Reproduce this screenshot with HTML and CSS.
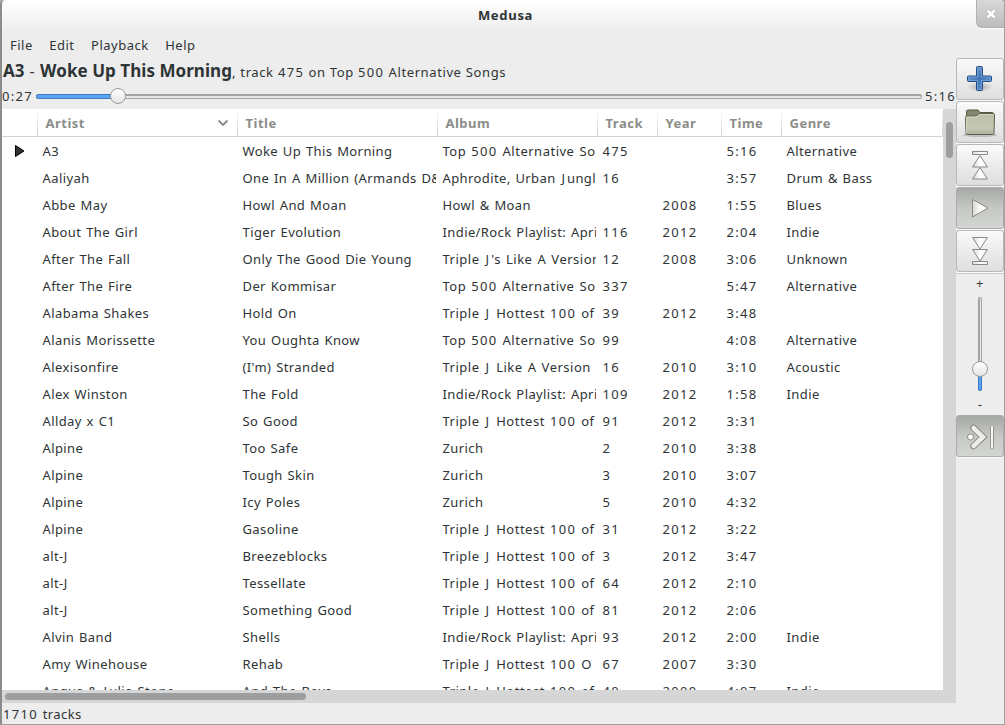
FILE: index.html
```html
<!DOCTYPE html>
<html lang="en">
<head>
<meta charset="utf-8">
<title>Medusa</title>
<link rel="stylesheet" href="styles.css">
</head>
<body>
<div class="window">
  <header class="titlebar"><span class="title">Medusa</span>
    <button class="close" aria-label="Close"><svg width="10" height="10" viewBox="0 0 10 10"><path d="M1.500 1.500 8.500 8.500M8.500 1.500 1.500 8.500" stroke="#888" stroke-width="3.800" opacity=".5"/><path d="M1.500 1.500 8.500 8.500M8.500 1.500 1.500 8.500" stroke="#fff" stroke-width="2.700"/></svg></button>
  </header>
  <nav class="menu"><span>File</span><span>Edit</span><span>Playback</span><span>Help</span></nav>
  <div class="content">
    <main class="main">
      <div class="now"><b class="now-artist">A3</b><span class="dash">-</span><b class="now-title">Woke Up This Morning</b><span class="now-rest">, track <i>475</i> on Top <i>500</i> Alternative Songs</span></div>
      <div class="seek"><span class="elapsed"><i>0:27</i></span>
        <div class="track"><div class="fill"></div><div class="knob"></div></div>
        <span class="total"><i>5:16</i></span></div>
      <div class="list">
        <div class="table">
          <div class="head row"><span></span><span class="sorted">Artist<svg width="12" height="8" viewBox="0 0 12 8"><path d="M1.5 1.5 6 6l4.500-4.500" fill="none" stroke="#888a85" stroke-width="1.800"/></svg></span><span>Title</span><span>Album</span><span>Track</span><span>Year</span><span>Time</span><span>Genre</span></div>
          <div class="rows" id="rows"></div>
        </div>
        <div class="vscroll"><div class="vthumb"></div></div>
      </div>
      <div class="hscroll"><div class="hthumb"></div></div>
      <footer class="status"><i>1710</i> tracks</footer>
    </main>
    <aside class="side">
      <button class="tool"><svg width="46" height="40" viewBox="0 0 46 40"><defs><linearGradient id="blue" x2="1" y2="1"><stop offset="0" stop-color="#86aedb"/><stop offset=".5" stop-color="#4377b8"/><stop offset="1" stop-color="#6f9bd0"/></linearGradient><radialGradient id="shade"><stop stop-color="#888" stop-opacity=".6"/><stop offset="1" stop-color="#888" stop-opacity="0"/></radialGradient></defs><ellipse cx="23" cy="28" rx="13" ry="5" fill="url(#shade)"/><path d="M19.500 8.500q0-1 1-1h4q1 0 1 1v8.500h8q1 0 1 1v3.500q0 1-1 1h-8v8q0 1-1 1h-4q-1 0-1-1v-8h-8q-1 0-1-1V18q0-1 1-1h8z" fill="url(#blue)" stroke="#204a87"/><path d="M20.500 8.500h4V18h9v3.500h-9v9h-4v-9h-9V18h9z" fill="none" stroke="#7fa7d8" opacity=".7"/></svg></button>
      <button class="tool"><svg width="46" height="40" viewBox="0 0 46 40"><defs><linearGradient id="folder" x2="0" y2="1"><stop stop-color="#bdc0a9"/><stop offset=".7" stop-color="#c4c7b2"/><stop offset="1" stop-color="#aeb199"/></linearGradient></defs><ellipse cx="23" cy="33" rx="17" ry="2" fill="#999" opacity=".5"/><path d="M9.500 30V9.500q0-1.500 1.500-1.500h10l2 2.500h12q1.500 0 1.500 1.500v18z" fill="#84876e" stroke="#555843"/><path d="M8.500 15.500q0-1.500 1.500-1.500h9l3.500-2.500H36q1.500 0 1.500 1.500L37 31q0 1.500-1.500 1.500H10.500Q9 32.500 9 31z" fill="url(#folder)" stroke="#5a5d49"/><path d="M9.500 31V15h10l3.500-2.500h13.500" fill="none" stroke="#d9dccb" opacity=".8"/></svg></button>
      <button class="tool"><svg width="46" height="40" viewBox="0 0 46 40"><defs><linearGradient id="metal"><stop stop-color="#d5d8d2"/><stop offset=".5" stop-color="#fff"/><stop offset="1" stop-color="#eeefec"/></linearGradient></defs><g fill="url(#metal)" stroke="#888a85"><path d="M15.500 6.500h15v3h-15zM23 10.500l7.500 11.500h-15zM23 22.500 30.500 34h-15z"/></g></svg></button>
      <button class="tool pressed"><svg width="46" height="40" viewBox="0 0 46 40"><path d="M15.500 11.500 31 20 15.500 29z" fill="url(#metal)" stroke="#888a85" stroke-linejoin="round"/></svg></button>
      <button class="tool"><svg width="46" height="40" viewBox="0 0 46 40"><path d="M15.500 6.500h15L23 18zM15.500 18.500h15L23 30zM15.500 30.500h15v3h-15z" fill="url(#metal)" stroke="#888a85"/></svg></button>
      <div class="volume"><span class="plus">+</span><div class="vtrack"><div class="vfill"></div><div class="knob vknob"></div></div><span class="minus">-</span></div>
      <button class="tool pressed"><svg width="46" height="40" viewBox="0 0 46 40"><path d="M16.500 12 26 21l-9.500 9" fill="none" stroke="#81847e" stroke-width="6.500" stroke-linecap="round"/><path d="M16.500 12 26 21l-9.500 9" fill="none" stroke="#ecedea" stroke-width="4.500" stroke-linecap="round"/><circle cx="13.500" cy="21" r="3" fill="#fff" stroke="#888a85"/><rect x="33.500" y="9.500" width="3" height="23" rx="1" fill="#f5f5f3" stroke="#92958f"/></svg></button>
    </aside>
  </div>
</div>
<script src="app.js"></script>
</body>
</html>
```

FILE: app.js
```js
const tracks = `A3|Woke Up This Morning|Top 500 Alternative So|475||5:16|Alternative
Aaliyah|One In A Million (Armands D&|Aphrodite, Urban Jungle|16||3:57|Drum & Bass
Abbe May|Howl And Moan|Howl & Moan||2008|1:55|Blues
About The Girl|Tiger Evolution|Indie/Rock Playlist: Apri|116|2012|2:04|Indie
After The Fall|Only The Good Die Young|Triple J's Like A Version|12|2008|3:06|Unknown
After The Fire|Der Kommisar|Top 500 Alternative So|337||5:47|Alternative
Alabama Shakes|Hold On|Triple J Hottest 100 of|39|2012|3:48|
Alanis Morissette|You Oughta Know|Top 500 Alternative So|99||4:08|Alternative
Alexisonfire|(I'm) Stranded|Triple J Like A Version (|16|2010|3:10|Acoustic
Alex Winston|The Fold|Indie/Rock Playlist: Apri|109|2012|1:58|Indie
Allday x C1|So Good|Triple J Hottest 100 of|91|2012|3:31|
Alpine|Too Safe|Zurich|2|2010|3:38|
Alpine|Tough Skin|Zurich|3|2010|3:07|
Alpine|Icy Poles|Zurich|5|2010|4:32|
Alpine|Gasoline|Triple J Hottest 100 of|31|2012|3:22|
alt-J|Breezeblocks|Triple J Hottest 100 of|3|2012|3:47|
alt-J|Tessellate|Triple J Hottest 100 of|64|2012|2:10|
alt-J|Something Good|Triple J Hottest 100 of|81|2012|2:06|
Alvin Band|Shells|Indie/Rock Playlist: Apri|93|2012|2:00|Indie
Amy Winehouse|Rehab|Triple J Hottest 100 O|67|2007|3:30|
Angus & Julia Stone|And The Boys|Triple J Hottest 100 of|40|2009|4:07|Indie`;

const rows = document.getElementById("rows");
tracks.split("\n").forEach((line, index) => {
  const row = document.createElement("div");
  row.className = "row";
  const marker = document.createElement("span");
  if (index === 0) {
    marker.className = "playing";
    marker.innerHTML = '<svg width="10" height="12" viewBox="0 0 10 12"><path d="M.5.5 9 6 .5 11.500z" fill="#333" stroke="#000"/></svg>';
  }
  row.append(marker);
  line.split("|").forEach((value, column) => {
    const cell = document.createElement("span");
    // Figures are set wider than letters.
    cell.innerHTML = value.replace(/&/g, "&amp;").replace(/[0-9:]*[0-9][0-9:]*/g, "<i>$&</i>").replace(/ J/, ' <i class="jay">J</i>');
    if (column === 2) {
      if (/^(Indie|Aph)/.test(value)) cell.className = "narrow";
      if (/^(Triple|Top)/.test(value)) cell.className = "wide";
    }
    row.append(cell);
  });
  rows.append(row);
});
```

FILE: styles.css
```css
* { box-sizing: border-box; }
body { margin: 0; background: #aaa; overflow: hidden; font: 13px/20px "Noto Sans", "Open Sans", sans-serif; letter-spacing: .4px; word-spacing: 1px; color: #2e3436; }
button { padding: 0; font: inherit; }
svg { display: block; }
i { font-style: normal; letter-spacing: 1.300px; }
.window { width: 1005px; height: 725px; display: flex; flex-direction: column; border: solid #a0a0a0; border-width: 0 1px 1px 2px; border-left-color: #8b8b8b; border-radius: 5px 5px 0 0; background: #ededed; overflow: hidden; }
.titlebar { height: 32px; flex: none; display: grid; grid-template-columns: 28px 1fr 28px; background: linear-gradient(#fff, #ededed); }
.title { grid-column: 2; text-align: center; font-weight: 700; line-height: 31px; padding-left: 5px; letter-spacing: .7px; }
.close { width: 28px; height: 28px; display: grid; place-items: center; border: 1px solid #b1b1b1; border-top: 0; border-right: 0; border-radius: 0 4px 0 6px; background: linear-gradient(#d8d8d8, #bcbcbc); box-shadow: 0 1px #fff; }
.menu { height: 26px; flex: none; display: flex; align-items: center; gap: 16.500px; padding-left: 8px; letter-spacing: .5px; }
.content { flex: 1; min-height: 0; display: grid; grid-template-columns: 954px 48px; }
.main { display: flex; flex-direction: column; min-width: 0; min-height: 0; }
.now { height: 27px; flex: none; display: flex; align-items: baseline; line-height: 26px; white-space: pre; padding-left: 1px; word-spacing: 0; }
.now b { font-size: 17px; letter-spacing: 0; }
.now .now-title { letter-spacing: .05px; }
.now-rest { letter-spacing: .6px; word-spacing: .3px; }
.dash { padding: 0 5px; font-size: 16px; }
.seek { height: 24px; flex: none; display: flex; align-items: center; padding-bottom: 2px; }
.elapsed { width: 34px; }
.total { width: 34px; padding-left: 3px; white-space: nowrap; }
.track { position: relative; width: 886px; height: 5px; border: solid #a1a6a1; border-width: 2px 1px 1px; border-radius: 3px; background: #e6e7e6; }
.fill { position: absolute; left: -1px; top: -2px; width: 80px; height: 5px; border: 1px solid #3a7bc8; border-radius: 3px; background: #5ba5f2; }
.knob { position: absolute; left: 73px; top: -8px; width: 16px; height: 16px; border: 1px solid #989b97; border-radius: 50%; background: linear-gradient(#fff, #e5e5e5); }
.list { height: 581px; flex: none; display: flex; }
.table { width: 941px; background: #fff; overflow: hidden; }
.row { display: grid; grid-template-columns: 36px 200px 200px 160px 60px 64px 60px 161px; height: 27px; }
.row > span { overflow: hidden; white-space: nowrap; line-height: 27px; padding-left: 4.500px; margin-right: 2px; }
.row > .narrow { letter-spacing: .4px; word-spacing: 1px; }
.row > .wide { letter-spacing: .5px; word-spacing: 1.200px; }
.jay { letter-spacing: 2px; padding-left: 1px; }
.row > .playing { margin: 0; padding: 7px 0 0 13px; }
.head.row { height: 28px; border-bottom: 1px solid #d3d3d3; color: #8b8d88; font-weight: 700; letter-spacing: .5px; }
.head.row > span { margin: 0; padding-left: 7.500px; line-height: 28px; border-right: 1px solid; border-image: linear-gradient(#fff, #d0d0d0) 1; }
.head.row > .sorted { display: flex; align-items: center; justify-content: space-between; padding-right: 8px; }
.rows { height: 553px; overflow: hidden; padding-top: 1px; }
.vscroll { width: 13px; padding: 13px 3px; background: #d6d6d6; }
.vthumb { height: 36px; border-radius: 4px; background: #9c9e9f; }
.hscroll { height: 13px; flex: none; padding: 3px; background: #d6d6d6; }
.hthumb { width: 301px; height: 7px; border-radius: 4px; background: #9c9e9f; }
.status { height: 21px; line-height: 22px; padding-left: 1px; }
.side { display: flex; flex-direction: column; gap: 1px; }
.tool { width: 48px; height: 42px; flex: none; border: 1px solid #b7b9b6; border-radius: 3px; background: linear-gradient(#fafafa, #dedede); box-shadow: 0 1px #fbfbfb; }
.pressed { border-color: #a9aca8; background: linear-gradient(#a5a8a4, #c5c8c4 50%, #d4d6d3); }
.volume { height: 141px; flex: none; display: flex; flex-direction: column; align-items: center; border-top: 1px solid #c9c9c9; }
.plus { height: 23px; flex: none; line-height: 19px; }
.vtrack { position: relative; width: 4px; height: 94px; flex: none; border: solid #a1a6a1; border-width: 1px 1px 1px 2px; border-radius: 3px; background: #e6e7e6; }
.vfill { position: absolute; left: -2px; top: 72px; width: 4px; height: 21px; border: 1px solid #3a7bc8; border-radius: 2px; background: #5ba5f2; }
.vknob { left: -8px; top: 63px; }
.minus { height: 23px; flex: none; line-height: 27px; }
```
